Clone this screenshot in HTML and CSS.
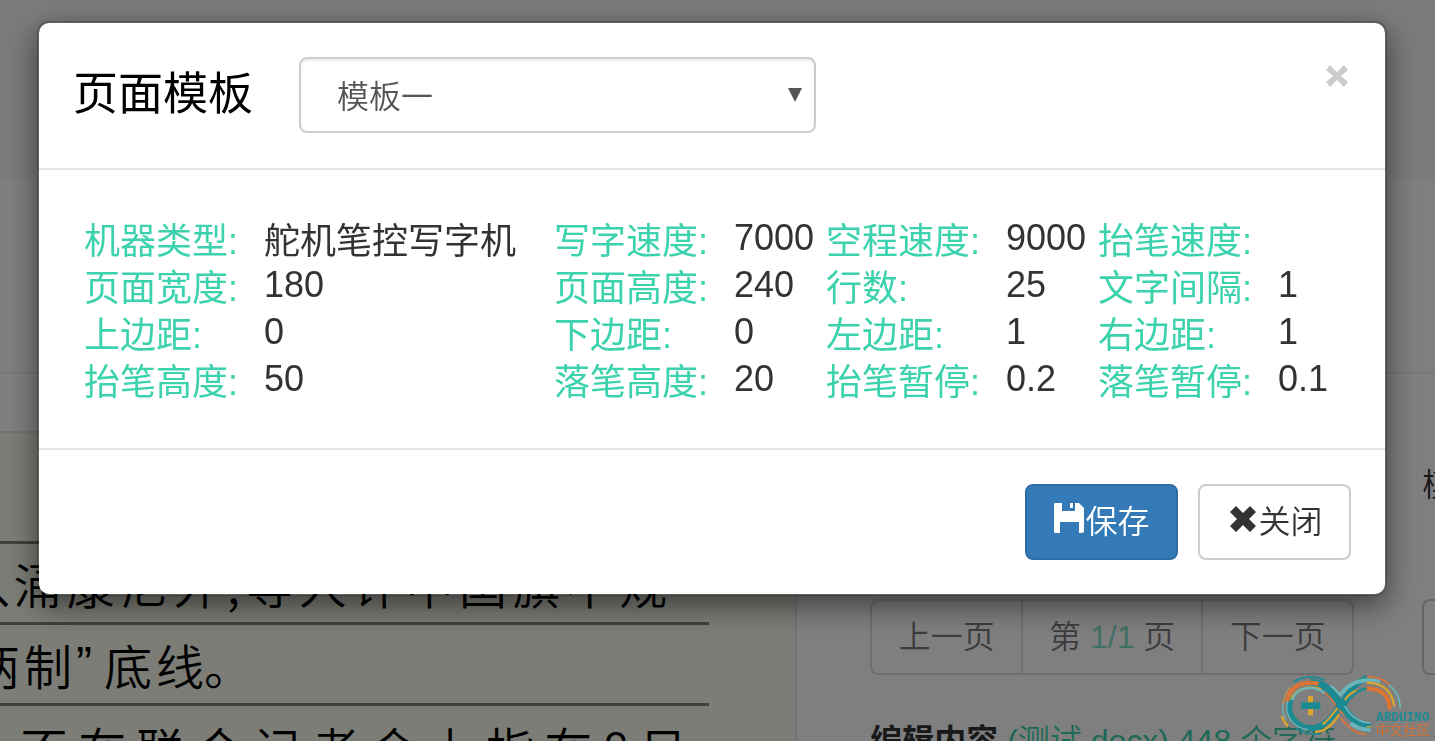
FILE: index.html
```html
<!DOCTYPE html>
<html lang="zh-CN">
<head>
<meta charset="utf-8">
<title>页面模板</title>
<link rel="stylesheet" href="styles.css">
</head>
<body>
<main class="page">
  <div class="band"></div>
  <div class="intro"></div>
  <div class="workspace">
    <section class="preview">
      <div class="preview-head"></div>
      <div class="paper">
        <div class="line line-first"></div>
        <div class="line line-wide"><span>、</span><span>涌</span><span>康</span><span>尼</span><span>外</span><span>,</span><span>等</span><span>人</span><span>许</span><span>中</span><span>国</span><span>旗</span><span>不</span><span>规</span></div>
        <div class="line line-short"><span>两</span><span>制</span><span class="quote">”</span><span>底</span><span>线。</span></div>
        <div class="line line-indent"><span>不</span><span>在</span><span>联</span><span>合</span><span>记</span><span>者</span><span>会</span><span>上</span><span>指</span><span>在</span><span>8</span><span>日</span></div>
      </div>
    </section>
    <section class="tools">
      <div class="tools-grid">
        <span class="template-label">模板</span>
        <div class="pager">
          <button type="button" disabled>上一页</button>
          <button type="button" disabled>第 <span class="accent">1/1</span> 页</button>
          <button type="button" disabled>下一页</button>
        </div>
        <button type="button" class="side-button" aria-label="模板"></button>
      </div>
      <p class="edit"><strong>编辑内容</strong> <span class="accent">(测试.docx) 448 个字符</span></p>
    </section>
  </div>
</main>

<div class="backdrop">
  <div class="modal" role="dialog" aria-labelledby="modal-title">
    <header class="modal-header">
      <h1 id="modal-title"><label for="template">页面模板</label></h1>
      <div class="select-wrap">
        <select id="template"><option>模板一</option></select>
        <svg class="arrow" viewBox="0 0 14 14" aria-hidden="true"><path d="M0 0h14L7 14z" fill="#555"/></svg>
      </div>
      <button type="button" class="close" aria-label="关闭窗口"><svg viewBox="0 0 24 24" aria-hidden="true"><path d="M5 1L12 8L19 1L23 6L16 12L23 18L19 23L12 16L5 23L1 18L8 12L1 6z" fill="#ccc"/></svg></button>
    </header>
    <div class="modal-body">
      <table class="settings">
        <colgroup><col class="c-label"><col class="c-wide"><col class="c-label"><col class="c-value"><col class="c-label"><col class="c-value"><col class="c-label"><col></colgroup>
        <tbody>
          <tr><th scope="row">机器类型:</th><td class="cjk">舵机笔控写字机</td><th scope="row">写字速度:</th><td>7000</td><th scope="row">空程速度:</th><td>9000</td><th scope="row">抬笔速度:</th><td></td></tr>
          <tr><th scope="row">页面宽度:</th><td>180</td><th scope="row">页面高度:</th><td>240</td><th scope="row">行数:</th><td>25</td><th scope="row">文字间隔:</th><td>1</td></tr>
          <tr><th scope="row">上边距:</th><td>0</td><th scope="row">下边距:</th><td>0</td><th scope="row">左边距:</th><td>1</td><th scope="row">右边距:</th><td>1</td></tr>
          <tr><th scope="row">抬笔高度:</th><td>50</td><th scope="row">落笔高度:</th><td>20</td><th scope="row">抬笔暂停:</th><td>0.2</td><th scope="row">落笔暂停:</th><td>0.1</td></tr>
        </tbody>
      </table>
    </div>
    <footer class="modal-footer">
      <button type="button" class="btn btn-primary"><svg class="icon" viewBox="0 0 32 32" aria-hidden="true"><path d="M2 1H9V9H26V1L31 6V29Q31 31 29 31H26V20H7V31H2Q1 31 1 29V2Q1 1 2 1zM17 1H20V6H17zM22 1H26V9H22z" fill="#fff"/></svg>保存</button>
      <button type="button" class="btn"><svg class="icon" viewBox="0 0 32 32" aria-hidden="true"><path d="M10 4L17 11L24 4L30 10L23 17L30 24L24 30L17 23L10 30L4 24L11 17L4 10z" fill="#333"/></svg>关闭</button>
    </footer>
  </div>
</div>

<svg class="watermark" viewBox="0 0 510 228" role="img" aria-label="Arduino 中文社区">
  <g fill="none">
    <path d="M86 50Q132 24 180 45" stroke="#1b8a92" stroke-width="5"/>
    <path d="M75 67Q54 90 53 130" stroke="#dba52e" stroke-width="3"/>
    <path d="M53 115Q50 140 62 163" stroke="#6db4b8" stroke-width="4"/>
    <path d="M50 153Q56 172 70 185" stroke="#dba52e" stroke-width="7"/>
    <path d="M79 96C58 144 91 188 139 190C180 188 207 151 228 118C250 83 270 51 309 38" stroke="#1b8a92" stroke-width="18"/>
    <path d="M136 52C180 51 199 80 228 118C255 158 274 176 318 187" stroke="#1b8a92" stroke-width="21"/>
    <path d="M66 110C71 70 105 45 161 56" stroke="#de7434" stroke-width="12"/>
    <path d="M78 104C90 73 130 59 168 73" stroke="#dba52e" stroke-width="7"/>
    <path d="M82 105C95 65 142 58 180 85" stroke="#6db4b8" stroke-width="7"/>
    <path d="M180 82C202 100 210 128 238 150" stroke="#de7434" stroke-width="4"/>
    <path d="M68 108C56 150 85 190 130 194" stroke="#6db4b8" stroke-width="4"/>
    <path d="M94 190Q122 210 165 207" stroke="#1b8a92" stroke-width="5"/>
    <path d="M150 201C184 200 207 173 222 148" stroke="#dba52e" stroke-width="7"/>
    <path d="M173 178C204 156 214 126 237 108C248 96 251 84 275 76" stroke="#dba52e" stroke-width="6"/>
    <path d="M216 128L240 106" stroke="#1b8a92" stroke-width="18"/>
    <path d="M196 61Q211 72 228 94" stroke="#6db4b8" stroke-width="7"/>
    <path d="M224 92C245 62 282 35 345 50" stroke="#6db4b8" stroke-width="12"/>
    <path d="M305 53C355 54 381 77 388 124" stroke="#dba52e" stroke-width="7"/>
    <path d="M305 35C340 35 365 48 377 64" stroke="#de7434" stroke-width="5"/>
    <path d="M372 60C397 80 404 99 406 130" stroke="#6db4b8" stroke-width="5"/>
    <path d="M305 71C350 70 374 92 374 133" stroke="#de7434" stroke-width="13"/>
    <path d="M305 72C284 70 254 96 239 123" stroke="#1b8a92" stroke-width="7"/>
    <path d="M239 123C254 149 279 172 316 174" stroke="#6db4b8" stroke-width="5"/>
    <path d="M257 175Q281 195 317 194" stroke="#6db4b8" stroke-width="12"/>
    <path d="M227 158C247 186 270 206 304 208" stroke="#de7434" stroke-width="5"/>
    <path d="M305 185H320" stroke="#dba52e" stroke-width="4"/>
  </g>
  <path d="M129 93h15v58h-15z" fill="#dba52e"/>
  <path d="M108 112h58v20h-58z" fill="#1b8a92"/>
  <text x="334" y="169" class="mark-latin">ARDUINO</text>
  <text x="332" y="211" class="mark-cjk">中文社区</text>
</svg>
</body>
</html>
```
FILE: styles.css
```css
* { box-sizing: border-box; }

body {
  margin: 0;
  min-height: 100vh;
  overflow: hidden;
  background: #fff;
  color: #333;
  font-family: "Liberation Sans", "Noto Sans CJK SC", sans-serif;
  font-size: 32px;
  font-weight: 350;
}

button, select { font: inherit; }

.page {
  height: 100vh;
  display: flex;
  flex-direction: column;
  overflow: hidden;
}

.band { flex: 0 0 178px; background: #f6f6f6; }
.intro { flex: 0 0 196px; border-bottom: 2px solid #f0f0f0; }

.workspace {
  flex: 1 0 auto;
  display: grid;
  grid-template-columns: 5fr 4fr;
}

.preview { min-width: 0; border-right: 2px solid #e7e7e7; }
.preview-head { height: 59px; border-bottom: 2px solid #e7e7e7; }
.paper { padding: 30px 86px 0 0; background: #f9faec; color: #000; }

.line {
  display: flex;
  align-items: center;
  height: 81px;
  border-bottom: 3px solid #808080;
  font-family: "Noto Sans CJK SC", sans-serif;
  font-size: 48px;
  line-height: 1;
  white-space: nowrap;
}

.line-wide { justify-content: space-between; padding: 0 42px 0 0; }
.line-wide span:first-child { margin: 0 -32px 0 -8px; }
.line-short { gap: 4px; }
.line-short span:first-child { margin-left: -28px; }
.line-indent { justify-content: space-between; padding: 4px 22px 0 20px; }
.quote { width: 24px; font-family: "Liberation Sans", sans-serif; }

.tools { min-width: 0; overflow: hidden; padding: 87px 0 0 73px; }

.tools-grid {
  display: grid;
  grid-template-columns: 484px auto;
  column-gap: 68px;
  row-gap: 90px;
}

.template-label { grid-column: 2; line-height: 48px; white-space: nowrap; }
.pager { display: flex; opacity: .65; }

.pager button {
  flex: 152 1 0;
  height: 76px;
  margin: 0 0 0 -2px;
  padding: 0 0 6px;
  border: 2px solid #ccc;
  background: #fff;
  color: #333;
  white-space: nowrap;
}

.pager button:nth-child(2) { flex-grow: 182; }
.pager button:first-child { margin-left: 0; border-radius: 8px 0 0 8px; }
.pager button:last-child { border-radius: 0 8px 8px 0; }

.side-button {
  width: 152px;
  border: 2px solid #ccc;
  border-radius: 8px;
  background: #fff;
}

.accent { color: #3dd2ae; }

.edit { margin: 42px 0 0; line-height: 48px; white-space: nowrap; }
.edit strong { font-weight: 700; }

.backdrop {
  position: fixed;
  inset: 0;
  overflow: hidden;
  background: rgba(0, 0, 0, .5);
}

.modal {
  margin: 21px 48px 21px 37px;
  border: 2px solid rgba(0, 0, 0, .2);
  border-radius: 12px;
  background: #fff;
  background-clip: padding-box;
  box-shadow: 0 10px 30px rgba(0, 0, 0, .5);
}

.modal-header {
  display: flex;
  align-items: center;
  padding: 34px 34px 35px;
  border-bottom: 2px solid #e5e5e5;
}

.modal-header h1 {
  margin: 0 46px 0 0;
  color: #000;
  font-size: 45px;
  font-weight: 400;
  line-height: 64px;
  white-space: nowrap;
}

.select-wrap { position: relative; flex: 0 1 517px; }

.select-wrap select {
  display: block;
  width: 100%;
  height: 76px;
  padding: 4px 36px 0;
  appearance: none;
  border: 2px solid #ccc;
  border-radius: 8px;
  background: #fff;
  box-shadow: inset 0 2px 2px rgba(0, 0, 0, .075);
  color: #555;
}

.arrow {
  position: absolute;
  top: 31px;
  right: 14px;
  width: 14px;
  height: 14px;
  pointer-events: none;
}

.close {
  align-self: flex-start;
  margin-left: auto;
  padding: 7px 2px;
  border: 0;
  background: none;
}

.close svg { display: block; width: 24px; height: 24px; }

.modal-body { padding: 44px 45px 46px; }

.settings {
  width: 100%;
  table-layout: fixed;
  border-collapse: collapse;
  font-size: 36px;
  line-height: 38px;
  white-space: nowrap;
}

.settings th, .settings td {
  height: 47px;
  padding: 0;
  text-align: left;
  font-weight: 400;
}

.settings th, .settings .cjk { padding-top: 9px; }
.settings th { color: #3dd2ae; }
.c-label { width: 180px; }
.c-wide { width: 290px; }
.c-value { width: 92px; }

.modal-footer {
  display: flex;
  justify-content: flex-end;
  gap: 20px;
  padding: 34px;
  border-top: 2px solid #e5e5e5;
}

.btn {
  display: flex;
  align-items: center;
  justify-content: center;
  min-width: 153px;
  height: 76px;
  padding: 0 26px 6px;
  border: 2px solid #ccc;
  border-radius: 8px;
  background: #fff;
  color: #333;
}

.btn-primary { border-color: #2e6da4; background: #337ab7; color: #fff; }
.icon { width: 32px; height: 32px; margin-bottom: 3px; }

.watermark {
  position: fixed;
  right: 0;
  bottom: 0;
  width: 170px;
  height: 76px;
}

.mark-latin {
  fill: #1b8a92;
  font: 700 38px "Liberation Mono", monospace;
}

.mark-cjk {
  fill: #d4702f;
  font: 400 41px "Noto Sans CJK SC", sans-serif;
}
```
